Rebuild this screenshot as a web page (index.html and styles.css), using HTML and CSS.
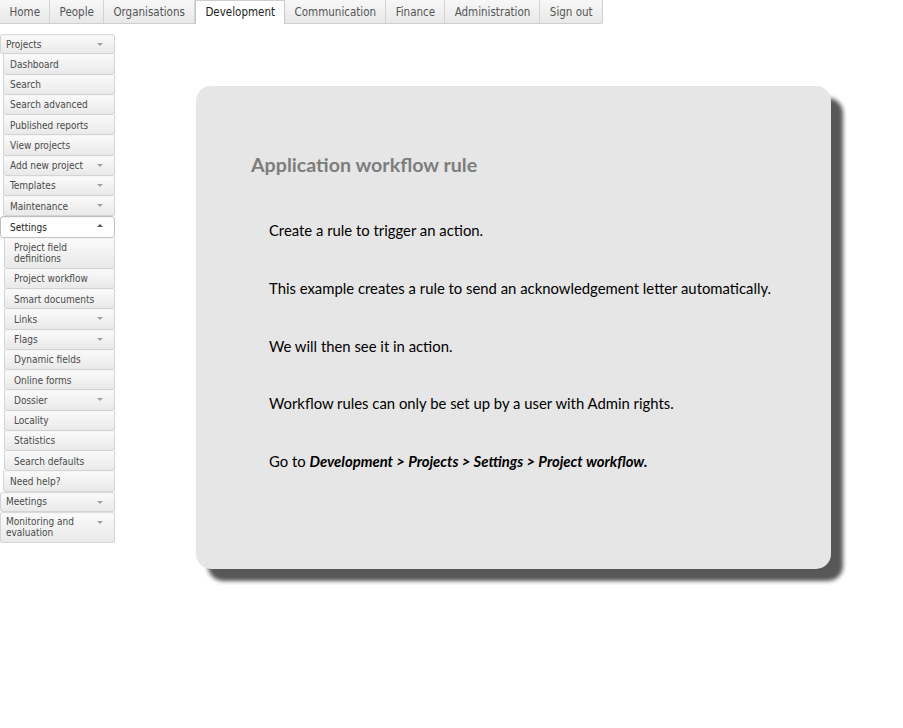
FILE: index.html
```
<!DOCTYPE html>
<html>
<head>
<meta charset="utf-8">
<link rel="stylesheet" href="styles.css">
</head>
<body>
<div class="topnav">
  <div class="tab">Home</div>
  <div class="tab">People</div>
  <div class="tab">Organisations</div>
  <div class="tab active">Development</div>
  <div class="tab">Communication</div>
  <div class="tab">Finance</div>
  <div class="tab">Administration</div>
  <div class="tab last">Sign out</div>
</div>
<div class="main">
  <div class="sidebar">
    <div class="item l0 arrow">Projects</div>
    <div class="item l1">Dashboard</div>
    <div class="item l1">Search</div>
    <div class="item l1">Search advanced</div>
    <div class="item l1">Published reports</div>
    <div class="item l1">View projects</div>
    <div class="item l1 arrow">Add new project</div>
    <div class="item l1 arrow">Templates</div>
    <div class="item l1 arrow">Maintenance</div>
    <div class="item l1 open">Settings</div>
    <div class="item l2">Project field<br>definitions</div>
    <div class="item l2">Project workflow</div>
    <div class="item l2">Smart documents</div>
    <div class="item l2 arrow">Links</div>
    <div class="item l2 arrow">Flags</div>
    <div class="item l2">Dynamic fields</div>
    <div class="item l2">Online forms</div>
    <div class="item l2 arrow">Dossier</div>
    <div class="item l2">Locality</div>
    <div class="item l2">Statistics</div>
    <div class="item l2">Search defaults</div>
    <div class="item l1">Need help?</div>
    <div class="item l0 arrow">Meetings</div>
    <div class="item l0 arrow">Monitoring and<br>evaluation</div>
  </div>
  <div class="card">
    <h1 class="title">Application workflow rule</h1>
    <p class="para">Create a rule to trigger an action.</p>
    <p class="para">This example creates a rule to send an acknowledgement letter automatically.</p>
    <p class="para">We will then see it in action.</p>
    <p class="para">Workflow rules can only be set up by a user with Admin rights.</p>
    <p class="para">Go to <b><i>Development &gt; Projects &gt; Settings &gt; Project workflow.</i></b></p>
  </div>
</div>
</body>
</html>
```
FILE: styles.css
```
html, body {
  margin: 0;
  padding: 0;
  background: #ffffff;
}
body {
  width: 903px;
  height: 728px;
  overflow: hidden;
  font-family: "DejaVu Sans", Verdana, sans-serif;
}
.topnav {
  display: flex;
  height: 24px;
  box-sizing: border-box;
}
.tab {
  height: 24px;
  box-sizing: border-box;
  padding: 2px 9px 0 9.5px;
  line-height: 21px;
  font-family: "DejaVu Sans Condensed", "DejaVu Sans", sans-serif;
  font-stretch: semi-condensed;
  font-size: 11.5px;
  color: #555;
  background: linear-gradient(#f7f7f7, #e8e8e8);
  border-right: 1px solid #d2d2d2;
  border-bottom: 1px solid #cfcfcf;
  white-space: nowrap;
}
.tab.active {
  background: #ffffff;
  color: #222;
  border-left: 1px solid #c8c8c8;
  border-right: 1px solid #c8c8c8;
  border-top: 1px solid #cfcfcf;
  border-bottom: none;
  padding: 1px 9px 0 9.5px;
}
.tab.last {
  border-radius: 0 0 3px 0;
  border-right: 1px solid #cfcfcf;
}
.main {
  display: flex;
  align-items: flex-start;
}
.sidebar {
  width: 115px;
  margin-top: 10px;
  display: flex;
  flex-direction: column;
}
.item {
  position: relative;
  box-sizing: border-box;
  font-family: "DejaVu Sans Condensed", "DejaVu Sans", sans-serif;
  font-stretch: semi-condensed;
  font-size: 10px;
  line-height: 11px;
  color: #4a4a4a;
  white-space: nowrap;
  padding: 4.5px 18px 3.75px 5px;
  background: linear-gradient(#fbfbfb, #e9e9e9);
  border: 1px solid #d4d4d4;
  border-top: none;
  border-radius: 0 0 3px 3px;
  box-shadow: inset 0 1px 0 #f4f4f4;
}
.item.l0 {
  margin-left: 0;
  border-radius: 3px;
  border-top: 1px solid #dcdcdc;
  padding-top: 3.5px;
}
.item.l1 {
  margin-left: 3px;
  padding-left: 6px;
}
.item.l2 {
  margin-left: 4px;
  padding-left: 9px;
}
.item.open {
  margin-left: 0;
  padding-left: 9px;
  background: #ffffff;
  color: #222;
  border: 1px solid #c0c0c0;
  border-radius: 3px;
}
.item.arrow::after {
  content: "";
  position: absolute;
  right: 11px;
  top: 8px;
  border-left: 3px solid transparent;
  border-right: 3px solid transparent;
  border-top: 3px solid #a0a0a0;
}
.item.open::after {
  content: "";
  position: absolute;
  right: 11px;
  top: 7px;
  border-left: 3px solid transparent;
  border-right: 3px solid transparent;
  border-bottom: 3px solid #555;
}
.card {
  margin-left: 81px;
  margin-top: 62px;
  width: 635px;
  height: 483px;
  box-sizing: border-box;
  background: #e6e6e6;
  border-radius: 15px;
  box-shadow: 12px 12px 4px #575757;
  padding: 67px 20px 0 55px;
  font-family: "Lato", "Open Sans", sans-serif;
}
.title {
  margin: 0;
  font-size: 19.65px;
  line-height: 24px;
  font-weight: bold;
  color: #7d7d7d;
}
.para {
  margin: 37.75px 0 0 18px;
  font-size: 14.85px;
  line-height: 20px;
  color: #000;
}
.title + .para {
  margin-top: 43px;
}
```
